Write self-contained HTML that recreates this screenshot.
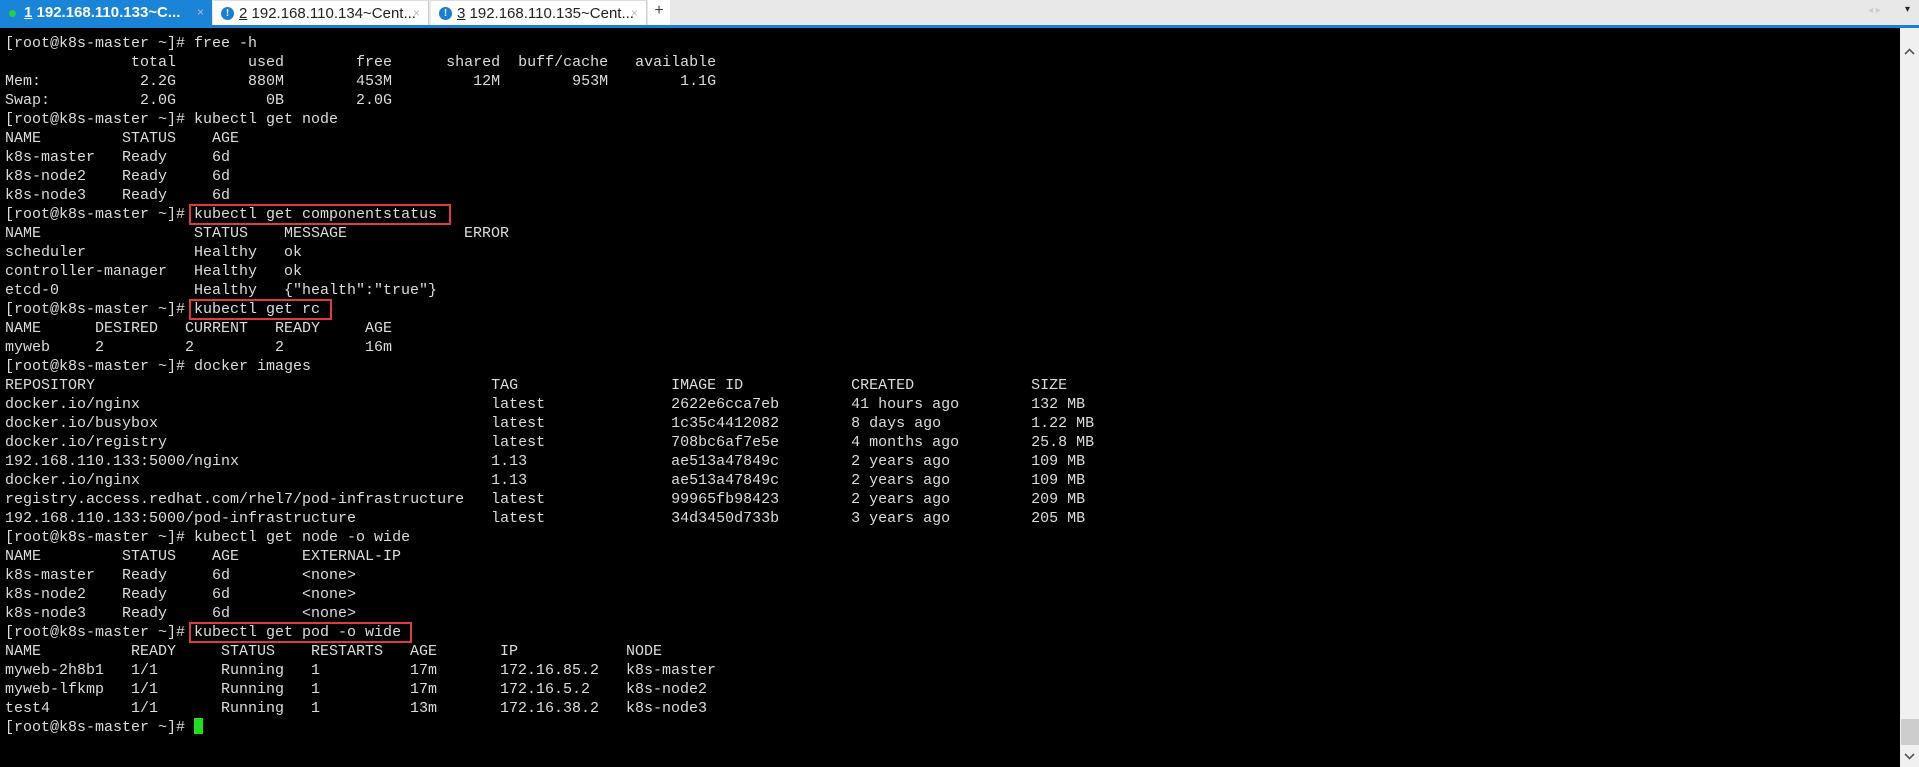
<!DOCTYPE html>
<html><head><meta charset="utf-8"><style>
*{margin:0;padding:0;box-sizing:border-box}
body{width:1919px;height:767px;overflow:hidden;background:#000;position:relative;font-family:"Liberation Sans",sans-serif}
#tabs{position:absolute;left:0;top:0;width:1919px;height:28px;background:#e8e8e8;border-bottom:3px solid #1a7fd4}
.tab{position:absolute;top:0;height:25px;font-size:15px;line-height:25px;white-space:nowrap}
.t1{left:0;width:212px;background:#1a84d8;color:#fff;font-weight:bold;height:28px}
.t2,.t3{background:#fff;color:#222;border-right:1px solid #ccc;border-top:1px solid #ddd}
.t2{left:213px;width:216px}.t3{left:431px;width:216px}
.dot{position:absolute;left:9px;top:10px;width:7px;height:7px;background:#28d03c;border-radius:50%}
.ico{display:inline-block;position:absolute;left:8px;top:6px;width:13px;height:13px;border-radius:50%;background:#1a7fd4;color:#fff;font-size:10px;line-height:13px;text-align:center;font-weight:bold}
.x{position:absolute;right:8px;top:0;color:#bbb;font-size:12px;font-weight:normal}
#term{position:absolute;left:5px;top:34px;font-family:"Liberation Mono",monospace;font-size:15px;line-height:19px;color:#dcdcdc;white-space:pre}
.r{height:19px}
.c{display:inline-block}
.box{position:absolute;border:2px solid #e0393e;left:189px;width:0;height:21px}
#sb{position:absolute;left:1900px;top:28px;width:19px;height:739px;background:#f0f0f0}
</style></head><body>
<div id="tabs">
<div class="tab t1"><span class="dot"></span><span style="position:absolute;left:24px"><u>1</u> 192.168.110.133~C...</span><span class="x">×</span></div>
<div class="tab t2"><span class="ico">!</span><span style="position:absolute;left:26px;font-weight:normal"><u>2</u> 192.168.110.134~Cent...</span><span class="x">×</span></div>
<div class="tab t3"><span class="ico">!</span><span style="position:absolute;left:26px"><u>3</u> 192.168.110.135~Cent...</span><span class="x">×</span></div>
<div style="position:absolute;left:648px;top:0;width:22px;height:25px;background:#fff;text-align:center;font-size:16px;line-height:22px;color:#444">+</div>
<div style="position:absolute;left:1868px;top:5px;font-size:10px;color:#ccc">◂ ▸</div>
<div style="position:absolute;left:1905px;top:4px;font-size:10px;color:#222">▾</div>
</div>
<div class="box" style="top:204px;width:262px"></div>
<div class="box" style="top:299px;width:143px"></div>
<div class="box" style="top:622px;width:223px"></div>
<div style="position:absolute;left:194px;top:718px;width:9px;height:16px;background:#1ee01e"></div>
<div id="term"><div class="r">[root@k8s-master ~]# free -h</div><div class="r">              total        used        free      shared  buff/cache   available</div><div class="r">Mem:           2.2G        880M        453M         12M        953M        1.1G</div><div class="r">Swap:          2.0G          0B        2.0G</div><div class="r">[root@k8s-master ~]# kubectl get node</div><div class="r"><span class="c" style="width:13ch">NAME</span><span class="c" style="width:10ch">STATUS</span>AGE</div><div class="r"><span class="c" style="width:13ch">k8s-master</span><span class="c" style="width:10ch">Ready</span>6d</div><div class="r"><span class="c" style="width:13ch">k8s-node2</span><span class="c" style="width:10ch">Ready</span>6d</div><div class="r"><span class="c" style="width:13ch">k8s-node3</span><span class="c" style="width:10ch">Ready</span>6d</div><div class="r">[root@k8s-master ~]# kubectl get componentstatus</div><div class="r"><span class="c" style="width:21ch">NAME</span><span class="c" style="width:10ch">STATUS</span><span class="c" style="width:20ch">MESSAGE</span>ERROR</div><div class="r"><span class="c" style="width:21ch">scheduler</span><span class="c" style="width:10ch">Healthy</span>ok</div><div class="r"><span class="c" style="width:21ch">controller-manager</span><span class="c" style="width:10ch">Healthy</span>ok</div><div class="r"><span class="c" style="width:21ch">etcd-0</span><span class="c" style="width:10ch">Healthy</span>{"health":"true"}</div><div class="r">[root@k8s-master ~]# kubectl get rc</div><div class="r"><span class="c" style="width:10ch">NAME</span><span class="c" style="width:10ch">DESIRED</span><span class="c" style="width:10ch">CURRENT</span><span class="c" style="width:10ch">READY</span>AGE</div><div class="r"><span class="c" style="width:10ch">myweb</span><span class="c" style="width:10ch">2</span><span class="c" style="width:10ch">2</span><span class="c" style="width:10ch">2</span>16m</div><div class="r">[root@k8s-master ~]# docker images</div><div class="r"><span class="c" style="width:54ch">REPOSITORY</span><span class="c" style="width:20ch">TAG</span><span class="c" style="width:20ch">IMAGE ID</span><span class="c" style="width:20ch">CREATED</span>SIZE</div><div class="r"><span class="c" style="width:54ch">docker.io/nginx</span><span class="c" style="width:20ch">latest</span><span class="c" style="width:20ch">2622e6cca7eb</span><span class="c" style="width:20ch">41 hours ago</span>132 MB</div><div class="r"><span class="c" style="width:54ch">docker.io/busybox</span><span class="c" style="width:20ch">latest</span><span class="c" style="width:20ch">1c35c4412082</span><span class="c" style="width:20ch">8 days ago</span>1.22 MB</div><div class="r"><span class="c" style="width:54ch">docker.io/registry</span><span class="c" style="width:20ch">latest</span><span class="c" style="width:20ch">708bc6af7e5e</span><span class="c" style="width:20ch">4 months ago</span>25.8 MB</div><div class="r"><span class="c" style="width:54ch">192.168.110.133:5000/nginx</span><span class="c" style="width:20ch">1.13</span><span class="c" style="width:20ch">ae513a47849c</span><span class="c" style="width:20ch">2 years ago</span>109 MB</div><div class="r"><span class="c" style="width:54ch">docker.io/nginx</span><span class="c" style="width:20ch">1.13</span><span class="c" style="width:20ch">ae513a47849c</span><span class="c" style="width:20ch">2 years ago</span>109 MB</div><div class="r"><span class="c" style="width:54ch">registry.access.redhat.com/rhel7/pod-infrastructure</span><span class="c" style="width:20ch">latest</span><span class="c" style="width:20ch">99965fb98423</span><span class="c" style="width:20ch">2 years ago</span>209 MB</div><div class="r"><span class="c" style="width:54ch">192.168.110.133:5000/pod-infrastructure</span><span class="c" style="width:20ch">latest</span><span class="c" style="width:20ch">34d3450d733b</span><span class="c" style="width:20ch">3 years ago</span>205 MB</div><div class="r">[root@k8s-master ~]# kubectl get node -o wide</div><div class="r"><span class="c" style="width:13ch">NAME</span><span class="c" style="width:10ch">STATUS</span><span class="c" style="width:10ch">AGE</span>EXTERNAL-IP</div><div class="r"><span class="c" style="width:13ch">k8s-master</span><span class="c" style="width:10ch">Ready</span><span class="c" style="width:10ch">6d</span>&lt;none&gt;</div><div class="r"><span class="c" style="width:13ch">k8s-node2</span><span class="c" style="width:10ch">Ready</span><span class="c" style="width:10ch">6d</span>&lt;none&gt;</div><div class="r"><span class="c" style="width:13ch">k8s-node3</span><span class="c" style="width:10ch">Ready</span><span class="c" style="width:10ch">6d</span>&lt;none&gt;</div><div class="r">[root@k8s-master ~]# kubectl get pod -o wide</div><div class="r"><span class="c" style="width:14ch">NAME</span><span class="c" style="width:10ch">READY</span><span class="c" style="width:10ch">STATUS</span><span class="c" style="width:11ch">RESTARTS</span><span class="c" style="width:10ch">AGE</span><span class="c" style="width:14ch">IP</span>NODE</div><div class="r"><span class="c" style="width:14ch">myweb-2h8b1</span><span class="c" style="width:10ch">1/1</span><span class="c" style="width:10ch">Running</span><span class="c" style="width:11ch">1</span><span class="c" style="width:10ch">17m</span><span class="c" style="width:14ch">172.16.85.2</span>k8s-master</div><div class="r"><span class="c" style="width:14ch">myweb-lfkmp</span><span class="c" style="width:10ch">1/1</span><span class="c" style="width:10ch">Running</span><span class="c" style="width:11ch">1</span><span class="c" style="width:10ch">17m</span><span class="c" style="width:14ch">172.16.5.2</span>k8s-node2</div><div class="r"><span class="c" style="width:14ch">test4</span><span class="c" style="width:10ch">1/1</span><span class="c" style="width:10ch">Running</span><span class="c" style="width:11ch">1</span><span class="c" style="width:10ch">13m</span><span class="c" style="width:14ch">172.16.38.2</span>k8s-node3</div><div class="r">[root@k8s-master ~]# </div></div>
<div id="sb">
<svg style="position:absolute;left:4px;top:20px" width="11" height="7"><path d="M1 6 L5.5 1.5 L10 6" stroke="#555" stroke-width="1.6" fill="none"/></svg>
<div style="position:absolute;left:1px;top:691px;width:18px;height:26px;background:#cdcdcd"></div>
<svg style="position:absolute;left:4px;top:725px" width="11" height="7"><path d="M1 1 L5.5 5.5 L10 1" stroke="#555" stroke-width="1.6" fill="none"/></svg>
</div>
</body></html>
